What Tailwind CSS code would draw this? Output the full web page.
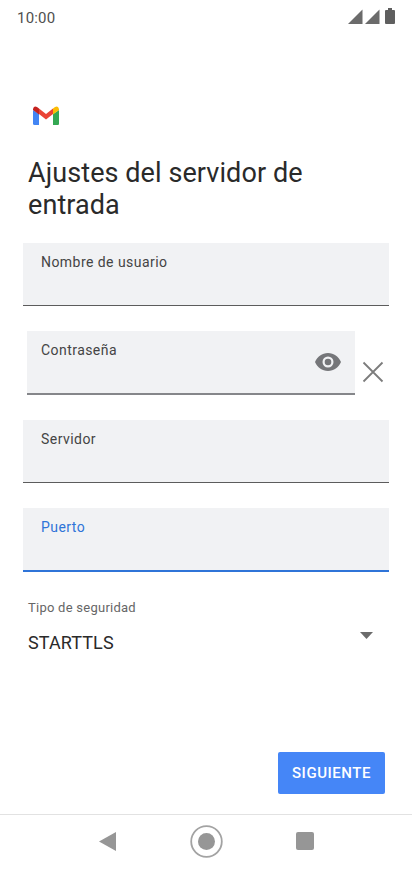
<!DOCTYPE html>
<html lang="es">
<head>
<meta charset="utf-8">
<script src="https://cdn.jsdelivr.net/npm/@tailwindcss/browser@4"></script>
<title>Ajustes del servidor de entrada</title>
</head>
<body class="bg-white">
<div class="w-[412px] h-[869px] overflow-hidden flex flex-col bg-white font-['Roboto',sans-serif]">
  <div class="h-[34px] shrink-0 flex items-center justify-between pl-[17px] pr-[17px]">
    <span class="text-[15px] leading-[20px] tracking-[0.2px] text-[#4f4f4f] mt-[1px]">10:00</span>
    <div class="flex items-center mt-[-2px]">
      <svg width="15" height="15" viewBox="0 0 15 15"><path d="M0 15 L14.500 0.500 V15 Z" fill="#6b6b6b"/></svg>
      <svg width="15" height="15" viewBox="0 0 15 15" class="ml-[2px]"><path d="M0 15 L14.500 0.500 V15 Z" fill="#6b6b6b"/></svg>
      <svg width="10" height="16" viewBox="0 0 10 16" class="ml-[5px]"><path d="M3 0 H7 V2 H9 Q10 2 10 3 V15 Q10 16 9 16 H1 Q0 16 0 15 V3 Q0 2 1 2 H3 Z" fill="#5f5f5f"/></svg>
    </div>
  </div>
  <div class="h-[91px] shrink-0 pl-[33px] flex items-end">
    <svg width="27" height="20" viewBox="0 0 27 20" class="mb-[-1px]">
      <path d="M0 4 V17.500 Q0 19 1.500 19 H6 V8 Z" fill="#4285f4"/>
      <path d="M20 8 V19 H25 Q26 19 26 17.500 V4 Z" fill="#34a853"/>
      <path d="M6 8 L13 13.500 L20 8 V2.500 L13 8 L6 2.500 Z" fill="#ea4335"/>
      <path d="M0 4 L6 8.500 V2.500 L4 1 Q1 -0.500 0 3 Z" fill="#c5221f"/>
      <path d="M20 2.500 V8.500 L26 4 V3 Q25 -0.500 22 1 Z" fill="#fbbc04"/>
    </svg>
  </div>
  <h1 class="mt-[32px] ml-[28px] mr-[80px] text-[27px] leading-[32px] font-normal tracking-[0.08px] text-[#2a2a2a]">Ajustes del servidor de entrada</h1>
  <div class="mt-[22px] ml-[23px] w-[366px] h-[63px] bg-[#f1f2f4] border-b border-[#5c5c5c] px-[18px] pt-[10px] text-[14px] leading-[18px] tracking-[0.45px] text-[#444444]">Nombre de usuario</div>
  <div class="mt-[25px] ml-[27px] flex items-start">
    <div class="w-[328px] h-[64px] bg-[#f1f2f4] border-b-2 border-[#85868a] pl-[14px] pr-[14px] pt-[10px] flex justify-between text-[14px] leading-[18px] tracking-[0.45px] text-[#444444]">
      <span>Contraseña</span>
      <svg width="26" height="18" viewBox="0 0 26 18" class="mt-[12px]"><path fill-rule="evenodd" d="M13 0 C19 0 23.500 3.500 26 9 C23.500 14.500 19 18 13 18 C7 18 2.500 14.500 0 9 C2.500 3.500 7 0 13 0 Z M13 3.500 A5.500 5.500 0 1 0 13 14.500 A5.500 5.500 0 1 0 13 3.500 Z M13 5.700 A3.300 3.300 0 1 1 13 12.300 A3.300 3.300 0 1 1 13 5.700 Z" fill="#757679"/></svg>
    </div>
    <svg width="22" height="22" viewBox="0 0 22 22" class="ml-[7px] mt-[30px]"><path d="M1.500 1.500 L20.500 20.500 M20.500 1.500 L1.500 20.500" stroke="#7c7c7c" stroke-width="1.800" fill="none"/></svg>
  </div>
  <div class="mt-[25px] ml-[23px] w-[366px] h-[63px] bg-[#f1f2f4] border-b border-[#5c5c5c] px-[18px] pt-[10px] text-[14px] leading-[18px] tracking-[0.45px] text-[#444444]">Servidor</div>
  <div class="mt-[25px] ml-[23px] w-[366px] h-[64px] bg-[#f1f2f4] border-b-2 border-[#2f74d8] px-[18px] pt-[10px] text-[14px] leading-[18px] tracking-[0.45px] text-[#2f74d8]">Puerto</div>
  <div class="mt-[27px] ml-[28px] text-[13px] leading-[18px] tracking-[0.25px] text-[#666666]">Tipo de seguridad</div>
  <div class="mt-[15px] pl-[28px] pr-[39px] flex items-start justify-between">
    <span class="text-[18px] leading-[21px] tracking-[0.1px] text-[#2a2a2a]">STARTTLS</span>
    <svg width="13" height="7" viewBox="0 0 13 7"><path d="M0 0 H13 L6.500 7 Z" fill="#6b6b6b"/></svg>
  </div>
  <div class="mt-[99px] pr-[27px] flex justify-end">
    <button class="w-[107px] h-[42px] rounded-[2px] bg-[#4586f7] text-white text-[15px] font-medium tracking-[0.55px]">SIGUIENTE</button>
  </div>
  <div class="mt-[20px] flex-1 border-t border-[#e2e2e2] flex items-start pt-[8px]">
    <div class="flex items-center w-full h-[36px] pl-[99px]">
      <svg width="17" height="19" viewBox="0 0 17 19"><path d="M17 0 V19 L0 9.500 Z" fill="#969696"/></svg>
      <svg width="33" height="33" viewBox="0 0 33 33" class="ml-[74px]"><circle cx="16.500" cy="16.500" r="15.300" fill="none" stroke="#a3a3a3" stroke-width="1.800"/><circle cx="16.500" cy="16.500" r="8.500" fill="#969696"/></svg>
      <div class="ml-[73px] w-[18px] h-[18px] rounded-[2px] bg-[#969696]"></div>
    </div>
  </div>
</div>
</body>
</html>
